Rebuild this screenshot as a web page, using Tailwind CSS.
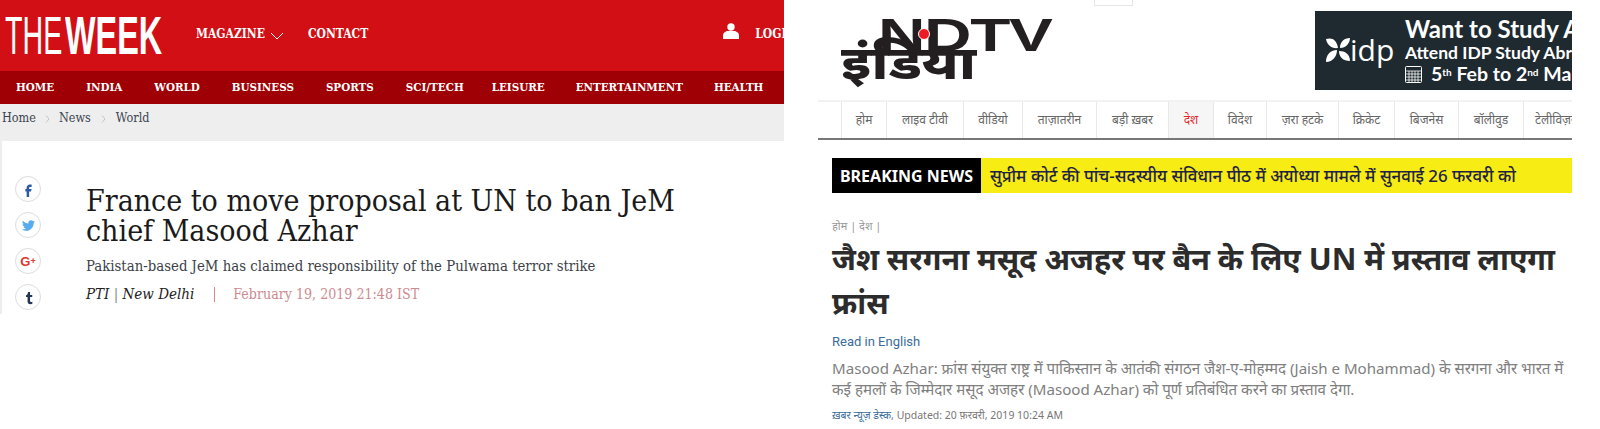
<!DOCTYPE html>
<html lang="en">
<head>
    <meta charset="UTF-8">
    <title>The Week / NDTV India</title>
    <script src="https://cdn.jsdelivr.net/npm/@tailwindcss/browser@4"></script>
</head>
<body class="bg-white">
    <div class="flex items-start w-[1600px] h-[429px] overflow-hidden">

        <!-- The Week -->
        <div class="w-[784px] h-[314px] shrink-0 overflow-hidden font-['DejaVu_Serif_Condensed','DejaVu_Serif',serif]">
            <div class="flex items-center h-[71px] bg-[#d10f15] text-white whitespace-nowrap">
                <div class="w-[196px] h-[71px] shrink-0 overflow-hidden pl-[5px] pt-[5px] font-['Liberation_Sans',sans-serif] text-[54px] leading-[60px]">
                    <span class="inline-block w-[60px] origin-left scale-x-[0.53]">THE</span><span class="inline-block font-bold origin-left scale-x-[0.6]">WEEK</span>
                </div>
                <span class="mb-[4px] text-[12px] font-bold">MAGAZINE</span>
                <svg class="ml-[5px] shrink-0" width="14" height="8" viewBox="0 0 14 8" fill="none" stroke="#fff" stroke-width="1"><path d="M1 1l6 6 6-6"/></svg>
                <span class="ml-[24px] mb-[4px] text-[12px] font-bold">CONTACT</span>
                <svg class="ml-[355px] mb-[9px] shrink-0" width="16" height="16" viewBox="0 0 16 16" fill="#fff"><circle cx="8" cy="4" r="3.7"/><path d="M0 16v-3.500C0 9.500 3 8 5 8h6c2 0 5 1.500 5 4.500V16z"/></svg>
                <span class="ml-[16px] mb-[4px] text-[12px] font-bold">LOGIN</span>
            </div>
            <div class="flex items-center gap-[32px] h-[33px] pl-[16px] bg-[#9e0005] text-white text-[11.500px] font-bold whitespace-nowrap">
                <span>HOME</span><span>INDIA</span><span>WORLD</span><span>BUSINESS</span><span>SPORTS</span><span class="-mr-[4px]">SCI/TECH</span><span class="-mr-[1px]">LEISURE</span><span class="-mr-[1px]">ENTERTAINMENT</span><span>HEALTH</span>
            </div>
            <div class="flex items-center h-[37px] pb-[8px] pl-[2px] bg-[#eeeeee] text-[#3c4450] text-[12.500px]">
                <span>Home</span>
                <svg class="mx-[9px] shrink-0" width="5" height="8" viewBox="0 0 5 8" fill="none" stroke="#c4c4c4"><path d="M1 0.500l3 3.500-3 3.500"/></svg>
                <span>News</span>
                <svg class="mx-[10px] shrink-0" width="5" height="8" viewBox="0 0 5 8" fill="none" stroke="#c4c4c4"><path d="M1 0.500l3 3.500-3 3.500"/></svg>
                <span>World</span>
            </div>
            <div class="flex h-[173px] border-l-2 border-[#eeeeee]">
                <div class="flex flex-col gap-[10px] w-[13px] ml-[13px] mt-[35px] shrink-0">
                    <div class="flex items-center justify-center w-[26px] h-[26px] shrink-0 rounded-full border border-[#dddddd]">
                        <svg width="15" height="15" viewBox="0 0 24 24" fill="#2d5aa5"><path d="M14 8h3V4h-3c-2.800 0-5 2.200-5 5v2H7v4h2v9h4v-9h3l1-4h-4V9c0-.6.4-1 1-1z"/></svg>
                    </div>
                    <div class="flex items-center justify-center w-[26px] h-[26px] shrink-0 rounded-full border border-[#dddddd]">
                        <svg width="13" height="13" viewBox="0 0 24 24" fill="#55acee"><path d="M23.953 4.570a10 10 0 01-2.825.775 4.958 4.958 0 002.163-2.723c-.951.555-2.005.959-3.127 1.184a4.920 4.920 0 00-8.384 4.482C7.690 8.095 4.067 6.130 1.640 3.162a4.822 4.822 0 00-.666 2.475c0 1.710.870 3.213 2.188 4.096a4.904 4.904 0 01-2.228-.616v.060a4.923 4.923 0 003.946 4.827 4.996 4.996 0 01-2.212.085 4.936 4.936 0 004.604 3.417 9.867 9.867 0 01-6.102 2.105c-.390 0-.779-.023-1.170-.067a13.995 13.995 0 007.557 2.209c9.053 0 13.998-7.496 13.998-13.985 0-.210 0-.420-.015-.630A9.935 9.935 0 0024 4.590z"/></svg>
                    </div>
                    <div class="flex items-center justify-center w-[26px] h-[26px] shrink-0 rounded-full border border-[#dddddd] font-['Liberation_Sans',sans-serif] font-bold text-[#dc3a2e] text-[13px] leading-none">G<span class="text-[9px]">+</span></div>
                    <div class="flex items-center justify-center w-[26px] h-[26px] shrink-0 rounded-full border border-[#dddddd]">
                        <svg width="15" height="15" viewBox="0 0 24 24" fill="#23365a"><path d="M14.500 3v5H18v3h-3.500v6c0 1.500.8 2 2 2 .6 0 1.200-.1 1.700-.4V22c-.8.4-2 .7-3.200.7-3 0-4.500-1.800-4.500-4.700v-7H8V8.500c2-.7 3-2.500 3.200-5.500z"/></svg>
                    </div>
                </div>
                <div class="ml-[58px] pt-[45px]">
                    <h1 class="text-[30px] leading-[30px] text-[#1a1a1a] whitespace-nowrap">France to move proposal at UN to ban JeM<br>chief Masood Azhar</h1>
                    <p class="mt-[10px] text-[14.800px] leading-[20px] text-[#3c3f48]">Pakistan-based JeM has claimed responsibility of the Pulwama terror strike</p>
                    <div class="flex items-center mt-[7px] text-[14.100px] leading-[22px] whitespace-nowrap">
                        <span class="italic text-[15px] text-[#222222]">PTI <span class="text-[#888888] not-italic">|</span> New Delhi</span>
                        <span class="ml-[20px] w-px h-[15px] bg-[#cf8a8e]"></span>
                        <span class="ml-[18px] text-[#cf8a8e]">February 19, 2019 21:48 IST</span>
                    </div>
                </div>
            </div>
        </div>

        <!-- NDTV India -->
        <div class="w-[754px] ml-[34px] shrink-0 overflow-hidden font-['Noto_Sans','Open_Sans',sans-serif]">
            <div class="relative h-[100px]">
                <div class="absolute left-[276px] top-0 w-[39px] h-[6px] border-x border-b border-[#e6e6e6]"></div>
                <!-- logo -->
                <div class="absolute left-[23px] top-[8px] w-[220px] h-[88px] overflow-hidden text-[#231f20] leading-none">
                    <div class="absolute left-[37px] top-[4px] origin-left scale-x-[1.43] font-['Liberation_Sans',sans-serif] font-bold text-[46px] tracking-[-1px]">NDTV</div>
                    <div class="absolute left-0 top-[30px] origin-left scale-x-[1.24] text-[46px] font-extrabold">इंडिया</div>
                    <div class="absolute left-[77px] top-[20px] w-[12px] h-[12px] rounded-full bg-[#ed1c24] border border-white"></div>
                </div>
                <!-- ad -->
                <div class="absolute left-[497px] top-[11px] flex w-[257px] h-[79px] overflow-hidden bg-[#1e2a30] text-white whitespace-nowrap">
                    <svg class="ml-[10px] mt-[26px] shrink-0" width="26" height="26" viewBox="0 0 26 26" fill="#fff"><path d="M1 2c6-2 11 1 12 9C7 12 2 8 1 2zM25 1c0 5-4 10-10 10 0-6 4-10 10-10zM12 13c0 6-4 12-11 12 0-7 4-12 11-12zM14 14c6 0 11 3 11 10-7 0-11-4-11-10z"/></svg>
                    <span class="-ml-[1px] mt-[19px] w-[46px] font-['Open_Sans',sans-serif] text-[30px] leading-[40px] shrink-0">idp</span>
                    <div class="ml-[9px] pt-[4px] font-['Lato',sans-serif] font-bold shrink-0">
                        <div class="text-[24px] leading-[28px]">Want to Study Abroad</div>
                        <div class="text-[17.500px] leading-[19px]">Attend IDP Study Abroad Fair</div>
                        <div class="flex items-center text-[19.500px] leading-[24px]">
                            <svg class="mr-[9px] shrink-0" width="17" height="17" viewBox="0 0 17 17" fill="none" stroke="#fff"><rect x="0.500" y="0.500" width="16" height="16" rx="1"/><path d="M1 5h15M1 8h15M1 11h15M1 14h15M4 5v11M7 5v11M10 5v11M13 5v11" stroke-width="0.800"/></svg>
                            <span>5<sup class="text-[10px]">th</sup> Feb to 2<sup class="text-[10px]">nd</sup> March</span>
                        </div>
                    </div>
                </div>
            </div>
            <!-- nav -->
            <div class="flex h-[40px] border-t-2 border-[#f2f2f2] border-b-2 border-b-[#777777] text-[12px] text-[#666666] whitespace-nowrap">
                <div class="w-[23px] shrink-0"></div>
                <div class="flex items-center justify-center w-[45px] shrink-0 border-l border-[#e8e8e8]">होम</div>
                <div class="flex items-center justify-center w-[77px] shrink-0 border-l border-[#e8e8e8]">लाइव टीवी</div>
                <div class="flex items-center justify-center w-[59px] shrink-0 border-l border-[#e8e8e8]">वीडियो</div>
                <div class="flex items-center justify-center w-[74px] shrink-0 border-l border-[#e8e8e8]">ताज़ातरीन</div>
                <div class="flex items-center justify-center w-[72px] shrink-0 border-l border-[#e8e8e8]">बड़ी ख़बर</div>
                <div class="flex items-center justify-center w-[45px] shrink-0 border-l border-[#e8e8e8] bg-[#f6f6f6] text-[#e8262b]">देश</div>
                <div class="flex items-center justify-center w-[53px] shrink-0 border-l border-[#e8e8e8]">विदेश</div>
                <div class="flex items-center justify-center w-[72px] shrink-0 border-l border-[#e8e8e8]">ज़रा हटके</div>
                <div class="flex items-center justify-center w-[56px] shrink-0 border-l border-[#e8e8e8]">क्रिकेट</div>
                <div class="flex items-center justify-center w-[64px] shrink-0 border-l border-[#e8e8e8]">बिजनेस</div>
                <div class="flex items-center justify-center w-[65px] shrink-0 border-l border-[#e8e8e8]">बॉलीवुड</div>
                <div class="pl-[11px] leading-[36px] shrink-0 border-l border-[#e8e8e8]">टेलीविज़न</div>
            </div>
            <!-- breaking -->
            <div class="flex items-center h-[35px] mt-[18px] ml-[14px] bg-[#f7ec13] whitespace-nowrap">
                <div class="flex items-center justify-center w-[149px] h-full bg-black text-white text-[16px] font-bold">BREAKING NEWS</div>
                <div class="ml-[9px] text-[16.900px] font-medium text-[#1f2340]">सुप्रीम कोर्ट की पांच-सदस्यीय संविधान पीठ में अयोध्या मामले में सुनवाई 26 फरवरी को</div>
            </div>
            <div class="ml-[14px]">
                <div class="mt-[26px] text-[11px] leading-[14px] text-[#999999]">होम | देश |</div>
                <h2 class="mt-[4px] text-[30.400px] leading-[44px] font-bold text-[#2c2c2c] whitespace-nowrap">जैश सरगना मसूद अजहर पर बैन के लिए UN में प्रस्ताव लाएगा<br>फ्रांस</h2>
                <div class="mt-[8px] font-['Roboto',sans-serif] text-[13px] leading-[18px] text-[#3a6d9a]">Read in English</div>
                <p class="mt-[7px] text-[15.100px] leading-[21px] text-[#808080] whitespace-nowrap">Masood Azhar: फ्रांस संयुक्त राष्ट्र में पाकिस्तान के आतंकी संगठन जैश-ए-मोहम्मद (Jaish e Mohammad) के सरगना और भारत में<br>कई हमलों के जिम्मेदार मसूद अजहर (Masood Azhar) को पूर्ण प्रतिबंधित करने का प्रस्ताव देगा.</p>
                <div class="mt-[7px] text-[10.500px] leading-[16px] text-[#777777]"><span class="text-[#3a6d9a]">ख़बर न्यूज़ डेस्क</span>, Updated: 20 फ़रवरी, 2019 10:24 AM</div>
            </div>
        </div>
    </div>
</body>
</html>
